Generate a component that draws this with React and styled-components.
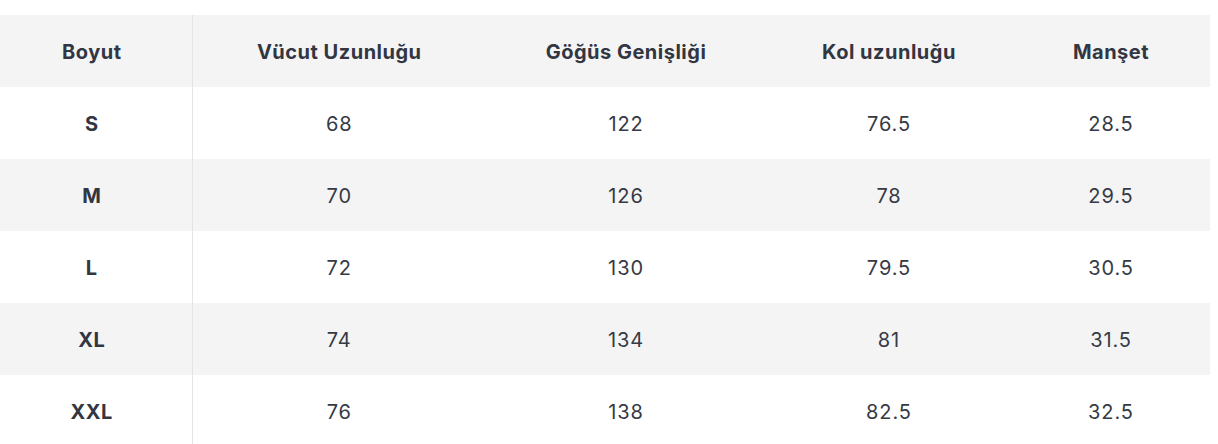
import React from 'react';
import styled, { createGlobalStyle } from 'styled-components';

const GlobalStyle = createGlobalStyle`
  html, body {
    margin: 0;
    padding: 0;
    background: #ffffff;
  }
  body {
    font-family: Inter, "Noto Sans", "Liberation Sans", sans-serif;
    -webkit-font-smoothing: antialiased;
  }
`;

const Wrapper = styled.div`
  padding-top: 15px;
  width: 1210px;
`;

const Table = styled.table`
  width: 1210px;
  border-collapse: collapse;
  table-layout: fixed;
  color: #363a45;
  font-size: 20px;
`;

const HeadCell = styled.th`
  box-sizing: border-box;
  height: 72px;
  padding: 1px 0 0;
  text-align: center;
  font-weight: 700;
  letter-spacing: 0.5px;
  color: #323643;
  background: #f4f4f4;
  border-left: ${p => (p.$divider ? '1px solid #e4e4e4' : 'none')};
  padding-right: ${p => (p.$first ? '8px' : '0')};
`;

const Row = styled.tr`
  background: ${p => (p.$striped ? '#f4f4f4' : '#ffffff')};
`;

const Cell = styled.td`
  box-sizing: border-box;
  height: 72px;
  padding: 2px 0 0;
  text-align: center;
  font-weight: ${p => (p.$first ? 700 : 400)};
  color: ${p => (p.$first ? '#323643' : '#363a45')};
  letter-spacing: ${p => (p.$first ? '0.5px' : '0.9px')};
  border-left: ${p => (p.$divider ? '1px solid #e4e4e4' : 'none')};
  padding-right: ${p => (p.$first ? '8px' : '0')};
`;

const columns = [
  { label: 'Boyut', width: 192 },
  { label: 'Vücut Uzunluğu', width: 294 },
  { label: 'Göğüs Genişliği', width: 280 },
  { label: 'Kol uzunluğu', width: 246 },
  { label: 'Manşet', width: 198 },
];

const rows = [
  ['S', '68', '122', '76.5', '28.5'],
  ['M', '70', '126', '78', '29.5'],
  ['L', '72', '130', '79.5', '30.5'],
  ['XL', '74', '134', '81', '31.5'],
  ['XXL', '76', '138', '82.5', '32.5'],
];

export default function App() {
  return (
    <>
      <GlobalStyle />
      <Wrapper>
        <Table>
          <colgroup>
            {columns.map(c => (
              <col key={c.label} style={{ width: c.width }} />
            ))}
          </colgroup>
          <thead>
            <tr>
              {columns.map((c, i) => (
                <HeadCell key={c.label} $first={i === 0} $divider={i === 1}>
                  {c.label}
                </HeadCell>
              ))}
            </tr>
          </thead>
          <tbody>
            {rows.map((r, ri) => (
              <Row key={r[0]} $striped={ri % 2 === 1}>
                {r.map((v, i) => (
                  <Cell key={i} $first={i === 0} $divider={i === 1}>
                    {v}
                  </Cell>
                ))}
              </Row>
            ))}
          </tbody>
        </Table>
      </Wrapper>
    </>
  );
}
